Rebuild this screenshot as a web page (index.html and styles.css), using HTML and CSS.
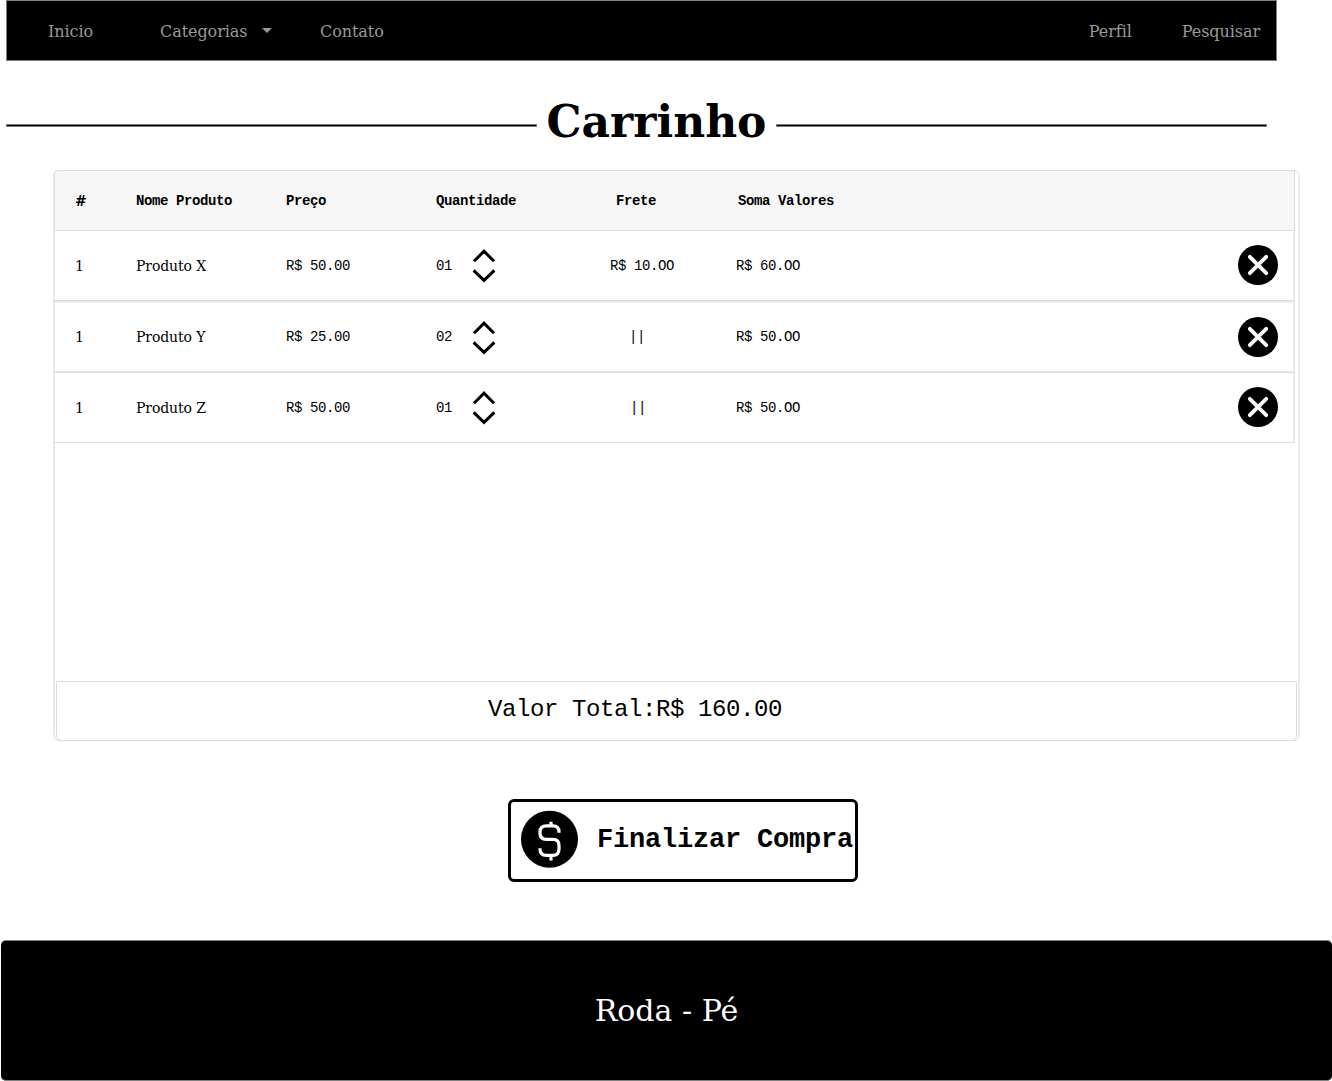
FILE: index.html
```html
<!DOCTYPE html>
<html lang="pt-BR">
<head>
<meta charset="utf-8">
<title>Carrinho</title>
<link rel="stylesheet" href="styles.css">
</head>
<body>
<svg class="defs" width="0" height="0" aria-hidden="true">
  <symbol id="close" viewBox="0 0 40 40"><circle cx="20" cy="20" r="20"/><path d="M11.8 11.8 28.2 28.2M28.2 11.8 11.8 28.2" fill="none" stroke="#fff" stroke-width="3.8" stroke-linecap="round"/></symbol>
  <symbol id="stepper" viewBox="0 0 24 34"><path d="M2 12.2 12 2.2 22 12.2M1.6 21.4 12 31.4 22.4 21.4" fill="none" stroke="#000" stroke-width="3"/></symbol>
</svg>
<nav class="nav">
  <a class="nav-home">Inicio</a>
  <a class="nav-categories">Categorias <svg class="caret" width="10" height="5" viewBox="0 0 10 5"><path d="M0 0H10L5 5Z"/></svg></a>
  <a>Contato</a>
  <a class="nav-profile">Perfil</a>
  <a>Pesquisar</a>
</nav>
<header class="heading">
  <span class="rule"></span>
  <h1 class="title">Carrinho</h1>
  <span class="rule"></span>
</header>
<main class="cart">
  <div class="row row-head">
    <span class="serif">#</span><span>Nome Produto</span><span>Preço</span><span>Quantidade</span><span></span><span class="head-freight">Frete</span><span class="head-sum">Soma Valores</span><span></span>
  </div>
  <div class="row row-first">
    <span class="serif">1</span><span class="serif">Produto X</span><span>R$ 50.00</span><span>01</span><svg class="stepper"><use href="#stepper"/></svg><span>R$ 10.OO</span><span>R$ 60.OO</span><svg class="close"><use href="#close"/></svg>
  </div>
  <div class="row row-second">
    <span class="serif">1</span><span class="serif">Produto Y</span><span>R$ 25.00</span><span>02</span><svg class="stepper"><use href="#stepper"/></svg><span class="ditto">||</span><span>R$ 50.OO</span><svg class="close"><use href="#close"/></svg>
  </div>
  <div class="row row-third">
    <span class="serif">1</span><span class="serif">Produto Z</span><span>R$ 50.00</span><span>01</span><svg class="stepper"><use href="#stepper"/></svg><span class="ditto ditto-last">||</span><span>R$ 50.OO</span><svg class="close"><use href="#close"/></svg>
  </div>
  <div class="total">Valor Total:R$ 160.00</div>
</main>
<button class="checkout">
  <svg class="coin" viewBox="0 0 58 58"><circle cx="28.5" cy="28.2" r="28.5"/><path d="M38 21.8V20.8Q38 14.8 32 14.8H25.5Q19 14.8 19 20.8V22.3Q19 28.3 25.5 28.3H32Q38 28.3 38 34.3V38Q38 44.3 32 44.3H25.5Q19 44.3 19 38.3V37.3M30 14.8V10.8M30 44.3V49.5" fill="none" stroke="#fff" stroke-width="3.2"/></svg>
  <span>Finalizar Compra</span>
</button>
<footer class="footer">Roda - Pé</footer>
</body>
</html>
```

FILE: styles.css
```css
* { box-sizing: border-box; }
body {
  margin: 0;
  height: 1081px;
  overflow: hidden;
  background: #fff;
  color: #000;
  font-family: "DejaVu Serif", serif;
  display: flex;
  flex-direction: column;
}
.defs { position: absolute; }
.nav {
  flex: none;
  width: 1271px;
  height: 61px;
  margin-left: 6px;
  padding: 2px 16px 0 41px;
  border: 1px solid #808080;
  background: #000;
  color: #999;
  font-size: 16px;
  letter-spacing: -0.06px;
  display: flex;
  align-items: center;
}
.nav-home { width: 112px; }
.nav-categories { width: 160px; display: flex; align-items: center; gap: 15px; }
.caret { fill: #999; margin-top: -2px; }
.nav-profile { margin-left: auto; margin-right: 50px; }
.heading {
  height: 109px;
  margin-left: 6px;
  width: 1261px;
  padding-top: 31px;
  display: flex;
  align-items: flex-start;
}
.rule {
  width: 531px;
  height: 3px;
  margin-top: 32px;
  background: #000;
  border: 1px solid #808080;
}
.rule:last-child { width: 491px; }
.title {
  width: 239px;
  margin: 0;
  line-height: 60px;
  font-size: 44px;
  text-align: center;
  white-space: nowrap;
}
.cart {
  width: 1247px;
  height: 571px;
  margin-left: 53px;
  border: 2px solid #eaeaea;
  border-top: 1px solid #dcdcdc;
  border-bottom: 1px solid #dcdcdc;
  border-radius: 6px;
  display: flex;
  flex-direction: column;
}
.row {
  margin-left: -1px;
  width: 1241px;
  padding: 0 15px 0 21px;
  display: grid;
  grid-template-columns: 61px 150px 150px 36px 138px 126px 1fr 40px;
  align-items: center;
  font: 14px "Liberation Mono", monospace;
  letter-spacing: -0.4px;
  border-right: 2px solid #eaeaea;
  border-bottom: 1px solid #dcdcdc;
}
.row-head {
  height: 61px;
  margin-top: -1px;
  background: #f7f7f7;
  border: 1px solid #dcdcdc;
  padding: 0 16px 0 20px;
  border-radius: 4px 0 0 0;
  font-weight: bold;
}
.row-head span { white-space: nowrap; }
.head-freight { padding-left: 6px; }
.head-sum { padding-left: 2px; }
.row-first { height: 70px; border-bottom-color: #dcdcdc; }
.row-second { height: 71px; border-top: 2px solid #ececec; border-bottom-color: #eaeaea; }
.row-third { height: 71px; border-top: 1px solid #dcdcdc; }
.serif { font-family: "DejaVu Serif", serif; letter-spacing: -0.1px; }
.stepper { width: 24px; height: 34px; }
.close { width: 40px; height: 40px; margin-top: -1px; }
.row-first .close { margin-top: -2px; }
.row-second .stepper { margin-top: 2px; }
.row-second .close { margin-top: 0; }
.ditto { padding-left: 19px; }
.ditto-last { padding-left: 20px; }
.total {
  width: 1241px;
  height: 60px;
  margin: auto 0 -1px 1px;
  padding-left: 431px;
  border: 1px solid #dcdcdc;
  border-radius: 0 0 6px 6px;
  font: 24px/56px "Liberation Mono", monospace;
  letter-spacing: -0.4px;
}
.checkout {
  width: 350px;
  height: 83px;
  margin: 58px 0 0 508px;
  padding: 0 0 2px 10px;
  border: 3px solid #000;
  border-radius: 6px;
  background: #fff;
  color: #000;
  display: flex;
  align-items: center;
  gap: 18px;
  font: bold 27px "Liberation Mono", monospace;
  letter-spacing: -0.2px;
  white-space: nowrap;
}
.coin { width: 58px; height: 58px; flex: none; overflow: visible; }
.footer {
  height: 141px;
  margin: 58px 0 0 1px;
  border-top: 1px solid #808080;
  border-bottom: 1px solid #808080;
  border-radius: 5px;
  background: #000;
  color: #fff;
  font-size: 30px;
  line-height: 140px;
  text-align: center;
}
```
